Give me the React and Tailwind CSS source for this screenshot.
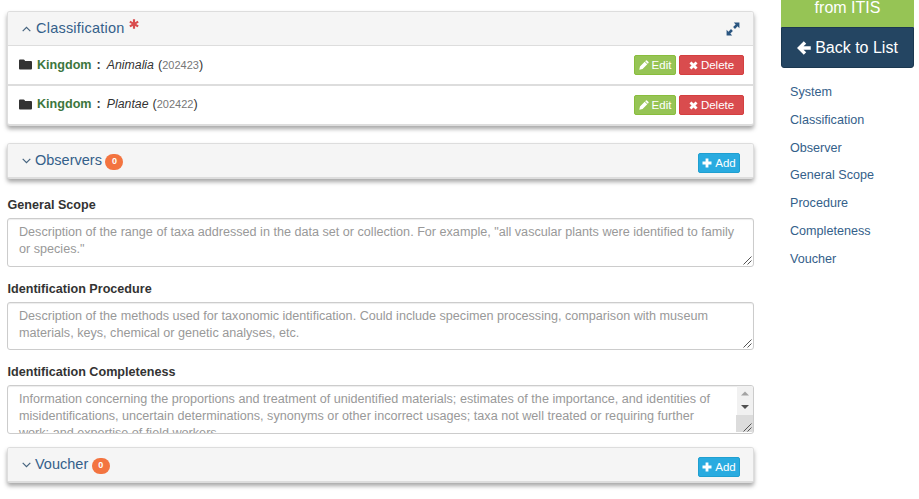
import React from "react";

const PANEL =
  "w-[747px] rounded-[3px] border border-[#ddd] border-b-2 bg-white shadow-[0_3px_4px_rgba(0,0,0,0.35)]";

function Icon({ d, className, box = 1200 }) {
  return (
    <svg viewBox={`0 0 ${box} ${box}`} className={className} fill="currentColor" aria-hidden="true">
      <path d={d} />
    </svg>
  );
}

const ICONS = {
  pencil: "M30 1170l90-400 560-560 310 310-560 560zM740 150l90-90q60-50 120 0l190 190q50 60 0 120l-90 90z",
  remove: "M320 60L600 340L880 60L1140 320L860 600L1140 880L880 1140L600 860L320 1140L60 880L340 600L60 320z",
  plus: "M430 60h340v370h370v340H770v370H430V770H60V430h370z",
  arrow: "M580 20L0 600L580 1180L790 970L560 760H1180V440H560L790 230z",
  folder: "M0 220q0-90 90-90h330q60 0 90 60l50 90h550q90 0 90 80v610q0 90-90 90H90q-90 0-90-90z",
  asterisk:
    "M470 20h260v355l307-177 130 225-307 177 307 177-130 225-307-177v355H470V825L163 1002 33 777l307-177L33 423l130-225 307 177z",
  expand:
    "M1150 50V530L990 370L770 590L610 430L830 210L670 50zM50 1150V670L210 830L430 610L590 770L370 990L530 1150z",
};

function Chevron({ up }) {
  return (
    <svg viewBox="0 0 9 6" className="h-[6px] w-[9px] text-[#46647f]" fill="none" stroke="currentColor" strokeWidth="1.2">
      <path d={up ? "M0.7 5.2L4.5 1.3L8.3 5.2" : "M0.7 0.8L4.5 4.7L8.3 0.8"} />
    </svg>
  );
}

function Button({ icon, label, className }) {
  return (
    <button
      className={`flex h-5 items-center justify-center gap-[3px] rounded-[2px] border text-[11.5px] leading-none text-white ${className}`}
    >
      <Icon d={ICONS[icon]} className={icon === "remove" ? "size-[9px]" : "size-[10px]"} />
      <span className="pt-px">{label}</span>
    </button>
  );
}

function TaxonRow({ name, id, textClass }) {
  return (
    <div className="flex h-[38px] items-center pr-[9px] pl-[11px]">
      <Icon d={ICONS.folder} className="mb-[2px] size-[13px] text-[#333]" />
      <div className={`ml-[5px] whitespace-pre text-[12.6px] text-[#333] ${textClass}`}>
        <b className="text-[#3c763d]">Kingdom</b>
        <b className="ml-[5px]">:</b>
        <i className="ml-[6px] text-[12.3px]">{name}</i>
        <span className="ml-1">(</span>
        <span className="text-[11px] text-[#777]">{id}</span>
        <span>)</span>
      </div>
      <div className="ml-auto flex gap-[3px]">
        <Button icon="pencil" label="Edit" className="w-[42px] border-[#89bd3c] bg-[#96c455]" />
        <Button icon="remove" label="Delete" className="w-[65px] border-[#d43f3f] bg-[#d94c4e]" />
      </div>
    </div>
  );
}

function CountPanel({ title, className }) {
  return (
    <section className={`${PANEL} ${className}`}>
      <div className="flex h-[33px] items-center rounded-t-[2px] bg-[#f5f5f5] pr-[13px] pl-[14px]">
        <Chevron />
        <h2 className="ml-[4px] text-[14.5px] text-[#34608a]">{title}</h2>
        <span className="mt-[2px] ml-[3.5px] flex h-4 w-[18px] items-center justify-center rounded-full bg-[#f37440] text-[9px] font-bold text-white">
          0
        </span>
        <Button icon="plus" label="Add" className="mt-[5px] ml-auto w-[42px] border-[#1f9fd0] bg-[#29abe0]" />
      </div>
    </section>
  );
}

function Grip() {
  return (
    <svg viewBox="0 0 9 9" className="size-[9px]" stroke="#555" strokeWidth="1" fill="none">
      <path d="M0.5 8.5L8.5 0.5M4.5 8.5L8.5 4.5" />
    </svg>
  );
}

function Field({ label, lines, scroll, className, boxClass = "h-[49px]" }) {
  return (
    <div className={className}>
      <div className="h-[22px] pt-px pl-[0.5px] text-[12.6px] leading-[17px] font-bold text-[#333]">{label}</div>
      <div
        className={`relative w-[747px] overflow-hidden rounded-[3px] border border-[#ccc] bg-white px-[11px] pt-[5px] text-[12.62px] leading-[17px] whitespace-nowrap text-[#999] shadow-[inset_0_1px_1px_rgba(0,0,0,0.075)] ${boxClass}`}
      >
        {lines.map((line) => (
          <div key={line}>{line}</div>
        ))}
        {scroll && (
          <div className="absolute top-0 right-0 flex h-full w-[17px] flex-col items-end">
            <svg viewBox="0 0 16 29" className="h-[29px] w-[16px] shrink-0 bg-[#f1f1f1]">
              <path d="M4 9.5h8l-4-4z" fill="#a3a3a3" />
              <path d="M4 19h8l-4 4z" fill="#505050" />
            </svg>
            <div className="h-[17px] w-[17px] bg-[#dcdcdc]" />
          </div>
        )}
        <div className="absolute right-[1px] bottom-[1px]">
          <Grip />
        </div>
      </div>
    </div>
  );
}

const LINKS = ["System", "Classification", "Observer", "General Scope", "Procedure", "Completeness", "Voucher"];

export default function App() {
  return (
    <div className="flex h-[499px] w-[919px] overflow-hidden bg-white font-['Liberation_Sans',Arial,sans-serif]">
      <main className="w-[754px] shrink-0 pt-[11px] pl-[7px]">
        <section className={PANEL}>
          <div className="flex h-[34px] items-center rounded-t-[2px] border-b border-[#ddd] bg-[#f5f5f5] pr-[13px] pl-[14px]">
            <Chevron up />
            <h2 className="mt-px ml-[5px] text-[14.5px] tracking-[0.22px] text-[#34608a]">Classification</h2>
            <Icon d={ICONS.asterisk} className="mb-[9px] ml-[4px] size-[10px] text-[#d94c4e]" />
            <Icon d={ICONS.expand} className="ml-auto size-[14px] text-[#2a5580]" />
          </div>
          <TaxonRow name="Animalia" id="202423" textClass="mt-px" />
          <div className="h-[2px] bg-[#ddd]" />
          <TaxonRow name="Plantae" id="202422" textClass="mb-px" />
        </section>
        <CountPanel title="Observers" className="mt-[17px]" />
        <Field
          className="mt-[17px]"
          label="General Scope"
          lines={[
            'Description of the range of taxa addressed in the data set or collection. For example, "all vascular plants were identified to family',
            'or species."',
          ]}
        />
        <Field
          className="mt-[13px]"
          boxClass="h-[48px]"
          label="Identification Procedure"
          lines={[
            "Description of the methods used for taxonomic identification. Could include specimen processing, comparison with museum",
            "materials, keys, chemical or genetic analyses, etc.",
          ]}
        />
        <Field
          className="mt-[13px]"
          label="Identification Completeness"
          scroll
          lines={[
            "Information concerning the proportions and treatment of unidentified materials; estimates of the importance, and identities of",
            "misidentifications, uncertain determinations, synonyms or other incorrect usages; taxa not well treated or requiring further",
            "work; and expertise of field workers.",
          ]}
        />
        <CountPanel title="Voucher" className="mt-[13px]" />
      </main>
      <aside className="ml-[27px] w-[133px]">
        <div className="flex h-[27px] justify-center bg-[#96c455] text-[16px] leading-[15px] text-white">from ITIS</div>
        <button className="flex h-[41px] w-full items-center justify-center gap-[4px] rounded-b-[3px] border border-[#1b3850] bg-[#244562] text-[16px] text-white">
          <Icon d={ICONS.arrow} className="size-[14px]" />
          <span>Back to List</span>
        </button>
        <nav className="mt-[10px] flex flex-col pl-[9px] text-[12.6px] text-[#34608a]">
          {LINKS.map((l) => (
            <a key={l} className="h-[27.75px] leading-[28px]">
              {l}
            </a>
          ))}
        </nav>
      </aside>
    </div>
  );
}
